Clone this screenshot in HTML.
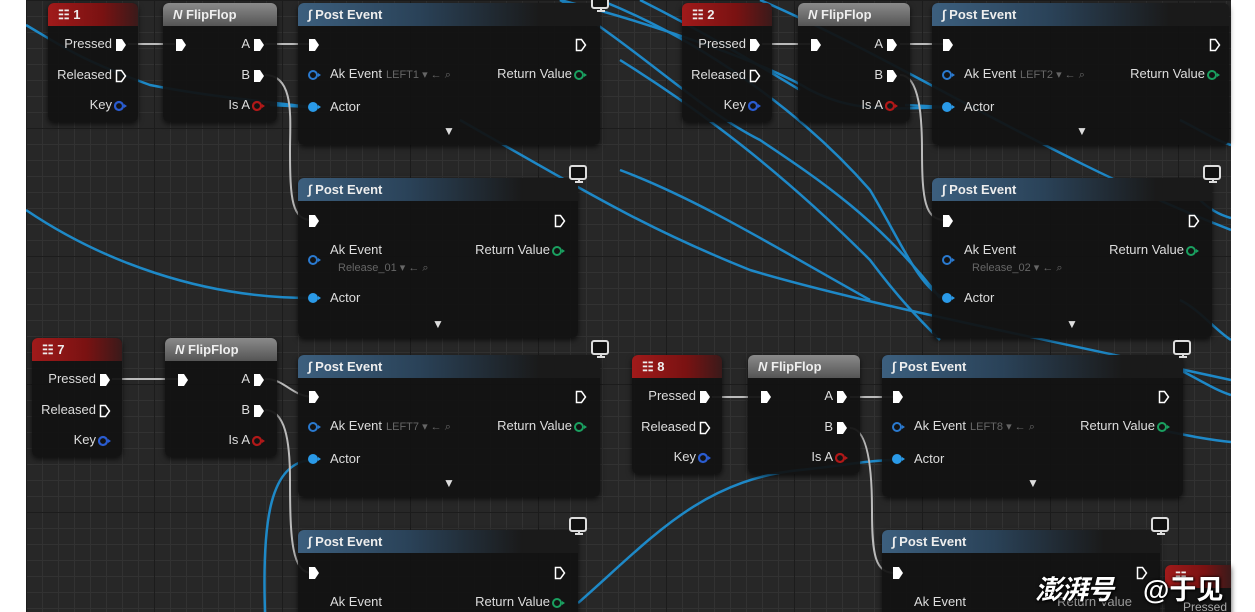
<!DOCTYPE html>
<html style="width:1255px;height:612px;overflow:hidden"><head><meta charset="utf-8"><style>
*{margin:0;padding:0;box-sizing:border-box}
body{width:1255px;height:612px;background:#fff;position:relative;overflow:hidden;font-family:"Liberation Sans","Noto Sans CJK SC",sans-serif;color:#ddd;font-size:13px}
#cv{position:absolute;left:26px;top:0;width:1205px;height:612px;background-color:#272727;
background-image:linear-gradient(#1c1c1c 1px,transparent 1px),linear-gradient(90deg,#1c1c1c 1px,transparent 1px),linear-gradient(#323232 1px,transparent 1px),linear-gradient(90deg,#323232 1px,transparent 1px);
background-size:128px 128px,128px 128px,16px 16px,16px 16px;overflow:hidden}
#clip{position:absolute;left:0;top:0;width:1255px;height:612px;overflow:hidden}
svg.w{position:absolute;left:0;top:0}
.n{position:absolute;background:rgba(18,18,18,.94);border-radius:6px;box-shadow:0 2px 6px rgba(0,0,0,.7);overflow:visible}
.h{height:23px;border-radius:6px 6px 0 0;font-weight:bold;font-size:13px;line-height:23px;padding-left:10px;color:#eee;position:relative}
.hk{background:linear-gradient(90deg,#a01a1a,#7a1212 60%,#3a1a1a)}
.hf{background:linear-gradient(180deg,#8a8a8a,#555)}
.hp{background:linear-gradient(90deg,#3c5f7e,#2a4258 40%,#1a1a1a 80%)}
.t{position:absolute;white-space:nowrap;line-height:16px}
.r{text-align:right}
.g{color:#666;font-size:11px}
.mon{position:absolute;width:22px;height:22px}
.wm{position:absolute;color:#fff;font-weight:bold;font-size:27px;text-shadow:0 0 3px #000,1px 1px 2px #000;white-space:nowrap}
</style></head><body><div id="clip">
<div id="cv">
<svg class="w" width="1205" height="612" viewBox="26 0 1205 612" fill="none">
<g stroke="#1e8ed0" stroke-width="2.5" opacity=".95">
<path d="M26 25 C60 45 80 60 150 85 C200 95 250 100 310 107"/>
<path d="M26 210 C100 260 200 298 310 298"/>
<path d="M560 0 C640 50 700 110 760 140 C820 180 880 220 940 298"/>
<path d="M600 0 C700 40 800 110 870 190 C900 240 920 290 945 298"/>
<path d="M620 60 C700 110 780 170 870 260 C900 300 920 320 940 340"/>
<path d="M620 170 C700 200 780 250 870 300"/>
<path d="M460 120 C600 200 650 230 750 270 C850 300 1000 330 1231 380"/>
<path d="M560 0 C640 20 760 60 810 90 C850 110 880 110 945 107"/>
<path d="M640 0 C700 30 750 60 800 90"/>
<path d="M760 0 C900 60 1050 160 1231 230"/>
<path d="M1180 120 C1200 130 1215 140 1231 145"/>
<path d="M1200 200 C1210 210 1220 215 1231 218"/>
<path d="M1180 300 C1200 310 1215 330 1231 340"/>
<path d="M1180 370 C1200 380 1215 390 1231 395"/>
<path d="M1160 430 C1190 436 1210 440 1231 442"/>
<path d="M265 612 C262 520 270 462 312 460"/>
<path d="M578 603 C650 540 700 480 800 470 C840 466 870 460 895 460"/>
<path d="M270 105 L310 107"/>
<path d="M905 105 L945 107"/>
</g>
<g stroke="#bbb" stroke-width="2">
<path d="M128 44 L175 44"/><path d="M265 44 L310 44"/>
<path d="M265 75 C295 75 290 120 290 150 C290 200 292 220 312 220"/>
<path d="M762 44 L810 44"/><path d="M900 44 L945 44"/>
<path d="M900 75 C920 75 922 120 922 150 C922 200 925 220 945 220"/>
<path d="M112 379 L178 379"/><path d="M265 379 C285 379 290 395 312 397"/>
<path d="M265 410 C285 410 290 440 290 480 C290 540 292 573 312 573"/>
<path d="M712 397 L762 397"/><path d="M850 397 L895 397"/>
<path d="M850 428 C870 428 872 480 872 510 C872 555 875 573 895 573"/>
</g>
</svg>
</div>

<!-- Key 1 -->
<div class="n" style="left:48px;top:3px;width:90px;height:119px"><div class="h hk">&#x2637; 1</div>
<div class="t r" style="right:26px;top:33px">Pressed</div><svg style="position:absolute;left:67px;top:35px" width="12" height="14"><path d="M1 1h6l4 6-4 6H1z" fill="#fff"/></svg>
<div class="t r" style="right:26px;top:64px">Released</div><svg style="position:absolute;left:67px;top:66px" width="12" height="14"><path d="M1.5 1.5h5l4 5.5-4 5.5h-5z" stroke="#fff" stroke-width="1.5" fill="none"/></svg>
<div class="t r" style="right:26px;top:94px">Key</div><svg style="position:absolute;left:66px;top:97px" width="14" height="12"><circle cx="5" cy="6" r="4" stroke="#2a5cd0" stroke-width="2.2" fill="none"/><path d="M10 4l3 2-3 2z" fill="#2a5cd0"/></svg>
</div>
<!-- FF 1 -->
<div class="n" style="left:163px;top:3px;width:114px;height:119px"><div class="h hf"><i>N</i> FlipFlop</div>
<svg style="position:absolute;left:12px;top:35px" width="12" height="14"><path d="M1 1h6l4 6-4 6H1z" fill="#fff"/></svg>
<div class="t r" style="right:27px;top:33px">A</div><svg style="position:absolute;left:90px;top:35px" width="12" height="14"><path d="M1 1h6l4 6-4 6H1z" fill="#fff"/></svg>
<div class="t r" style="right:27px;top:64px">B</div><svg style="position:absolute;left:90px;top:66px" width="12" height="14"><path d="M1 1h6l4 6-4 6H1z" fill="#fff"/></svg>
<div class="t r" style="right:27px;top:94px">Is A</div><svg style="position:absolute;left:89px;top:97px" width="14" height="12"><circle cx="5" cy="6" r="4" stroke="#b01818" stroke-width="2.2" fill="none"/><path d="M10 4l3 2-3 2z" fill="#b01818"/></svg>
</div>
<!-- PE 1a -->
<div class="n" style="left:298px;top:3px;width:302px;height:142px"><div class="h hp"><i>&#x222B;</i> Post Event</div>
<svg style="position:absolute;left:10px;top:35px" width="12" height="14"><path d="M1 1h6l4 6-4 6H1z" fill="#fff"/></svg>
<svg style="position:absolute;left:277px;top:35px" width="12" height="14"><path d="M1.5 1.5h5l4 5.5-4 5.5h-5z" stroke="#fff" stroke-width="1.5" fill="none"/></svg>
<svg style="position:absolute;left:10px;top:66px" width="14" height="12"><circle cx="5" cy="6" r="4" stroke="#2a7ad0" stroke-width="2" fill="none"/><path d="M10 4l3 2-3 2z" fill="#2a7ad0"/></svg>
<div class="t" style="left:32px;top:63px">Ak Event</div><div class="t g" style="left:88px;top:64px">LEFT1 &#x25BE; &#x2190; &#x2315;</div>
<div class="t r" style="right:28px;top:63px">Return Value</div><svg style="position:absolute;left:276px;top:66px" width="14" height="12"><circle cx="5" cy="6" r="4" stroke="#1aa060" stroke-width="2" fill="none"/><path d="M10 4l3 2-3 2z" fill="#1aa060"/></svg>
<svg style="position:absolute;left:10px;top:98px" width="14" height="12"><circle cx="5" cy="6" r="5" fill="#2a9ae8"/><path d="M10 4l3 2-3 2z" fill="#2a9ae8"/></svg>
<div class="t" style="left:32px;top:96px">Actor</div>
<div class="t" style="left:145px;top:120px;font-size:12px">&#x25BC;</div>
<svg class="mon" style="left:290px;top:-10px" viewBox="0 0 22 22"><rect x="4" y="2" width="16" height="13" rx="2" fill="#111" stroke="#ddd" stroke-width="2"/><path d="M9 18h8M13 15v3" stroke="#ddd" stroke-width="2"/></svg>
</div>
<!-- PE 1b -->
<div class="n" style="left:298px;top:178px;width:280px;height:160px"><div class="h hp"><i>&#x222B;</i> Post Event</div>
<svg style="position:absolute;left:10px;top:36px" width="12" height="14"><path d="M1 1h6l4 6-4 6H1z" fill="#fff"/></svg>
<svg style="position:absolute;left:256px;top:36px" width="12" height="14"><path d="M1.5 1.5h5l4 5.5-4 5.5h-5z" stroke="#fff" stroke-width="1.5" fill="none"/></svg>
<svg style="position:absolute;left:10px;top:76px" width="14" height="12"><circle cx="5" cy="6" r="4" stroke="#2a7ad0" stroke-width="2" fill="none"/><path d="M10 4l3 2-3 2z" fill="#2a7ad0"/></svg>
<div class="t" style="left:32px;top:64px">Ak Event</div><div class="t g" style="left:40px;top:82px">Release_01 &#x25BE; &#x2190; &#x2315;</div>
<div class="t r" style="right:28px;top:64px">Return Value</div><svg style="position:absolute;left:254px;top:67px" width="14" height="12"><circle cx="5" cy="6" r="4" stroke="#1aa060" stroke-width="2" fill="none"/><path d="M10 4l3 2-3 2z" fill="#1aa060"/></svg>
<svg style="position:absolute;left:10px;top:114px" width="14" height="12"><circle cx="5" cy="6" r="5" fill="#2a9ae8"/><path d="M10 4l3 2-3 2z" fill="#2a9ae8"/></svg>
<div class="t" style="left:32px;top:112px">Actor</div>
<div class="t" style="left:134px;top:138px;font-size:12px">&#x25BC;</div>
<svg class="mon" style="left:268px;top:-14px" viewBox="0 0 22 22"><rect x="4" y="2" width="16" height="13" rx="2" fill="#111" stroke="#ddd" stroke-width="2"/><path d="M9 18h8M13 15v3" stroke="#ddd" stroke-width="2"/></svg>
</div>

<!-- Key 2 -->
<div class="n" style="left:682px;top:3px;width:90px;height:119px"><div class="h hk">&#x2637; 2</div>
<div class="t r" style="right:26px;top:33px">Pressed</div><svg style="position:absolute;left:67px;top:35px" width="12" height="14"><path d="M1 1h6l4 6-4 6H1z" fill="#fff"/></svg>
<div class="t r" style="right:26px;top:64px">Released</div><svg style="position:absolute;left:67px;top:66px" width="12" height="14"><path d="M1.5 1.5h5l4 5.5-4 5.5h-5z" stroke="#fff" stroke-width="1.5" fill="none"/></svg>
<div class="t r" style="right:26px;top:94px">Key</div><svg style="position:absolute;left:66px;top:97px" width="14" height="12"><circle cx="5" cy="6" r="4" stroke="#2a5cd0" stroke-width="2.2" fill="none"/><path d="M10 4l3 2-3 2z" fill="#2a5cd0"/></svg>
</div>
<div class="n" style="left:798px;top:3px;width:112px;height:119px"><div class="h hf"><i>N</i> FlipFlop</div>
<svg style="position:absolute;left:12px;top:35px" width="12" height="14"><path d="M1 1h6l4 6-4 6H1z" fill="#fff"/></svg>
<div class="t r" style="right:27px;top:33px">A</div><svg style="position:absolute;left:88px;top:35px" width="12" height="14"><path d="M1 1h6l4 6-4 6H1z" fill="#fff"/></svg>
<div class="t r" style="right:27px;top:64px">B</div><svg style="position:absolute;left:88px;top:66px" width="12" height="14"><path d="M1 1h6l4 6-4 6H1z" fill="#fff"/></svg>
<div class="t r" style="right:27px;top:94px">Is A</div><svg style="position:absolute;left:87px;top:97px" width="14" height="12"><circle cx="5" cy="6" r="4" stroke="#b01818" stroke-width="2.2" fill="none"/><path d="M10 4l3 2-3 2z" fill="#b01818"/></svg>
</div>
<div class="n" style="left:932px;top:3px;width:297px;height:142px"><div class="h hp"><i>&#x222B;</i> Post Event</div>
<svg style="position:absolute;left:10px;top:35px" width="12" height="14"><path d="M1 1h6l4 6-4 6H1z" fill="#fff"/></svg>
<svg style="position:absolute;left:277px;top:35px" width="12" height="14"><path d="M1.5 1.5h5l4 5.5-4 5.5h-5z" stroke="#fff" stroke-width="1.5" fill="none"/></svg>
<svg style="position:absolute;left:10px;top:66px" width="14" height="12"><circle cx="5" cy="6" r="4" stroke="#2a7ad0" stroke-width="2" fill="none"/><path d="M10 4l3 2-3 2z" fill="#2a7ad0"/></svg>
<div class="t" style="left:32px;top:63px">Ak Event</div><div class="t g" style="left:88px;top:64px">LEFT2 &#x25BE; &#x2190; &#x2315;</div>
<div class="t r" style="right:24px;top:63px">Return Value</div><svg style="position:absolute;left:275px;top:66px" width="14" height="12"><circle cx="5" cy="6" r="4" stroke="#1aa060" stroke-width="2" fill="none"/><path d="M10 4l3 2-3 2z" fill="#1aa060"/></svg>
<svg style="position:absolute;left:10px;top:98px" width="14" height="12"><circle cx="5" cy="6" r="5" fill="#2a9ae8"/><path d="M10 4l3 2-3 2z" fill="#2a9ae8"/></svg>
<div class="t" style="left:32px;top:96px">Actor</div>
<div class="t" style="left:144px;top:120px;font-size:12px">&#x25BC;</div>
</div>
<div class="n" style="left:932px;top:178px;width:280px;height:160px"><div class="h hp"><i>&#x222B;</i> Post Event</div>
<svg style="position:absolute;left:10px;top:36px" width="12" height="14"><path d="M1 1h6l4 6-4 6H1z" fill="#fff"/></svg>
<svg style="position:absolute;left:256px;top:36px" width="12" height="14"><path d="M1.5 1.5h5l4 5.5-4 5.5h-5z" stroke="#fff" stroke-width="1.5" fill="none"/></svg>
<svg style="position:absolute;left:10px;top:76px" width="14" height="12"><circle cx="5" cy="6" r="4" stroke="#2a7ad0" stroke-width="2" fill="none"/><path d="M10 4l3 2-3 2z" fill="#2a7ad0"/></svg>
<div class="t" style="left:32px;top:64px">Ak Event</div><div class="t g" style="left:40px;top:82px">Release_02 &#x25BE; &#x2190; &#x2315;</div>
<div class="t r" style="right:28px;top:64px">Return Value</div><svg style="position:absolute;left:254px;top:67px" width="14" height="12"><circle cx="5" cy="6" r="4" stroke="#1aa060" stroke-width="2" fill="none"/><path d="M10 4l3 2-3 2z" fill="#1aa060"/></svg>
<svg style="position:absolute;left:10px;top:114px" width="14" height="12"><circle cx="5" cy="6" r="5" fill="#2a9ae8"/><path d="M10 4l3 2-3 2z" fill="#2a9ae8"/></svg>
<div class="t" style="left:32px;top:112px">Actor</div>
<div class="t" style="left:134px;top:138px;font-size:12px">&#x25BC;</div>
<svg class="mon" style="left:268px;top:-14px" viewBox="0 0 22 22"><rect x="4" y="2" width="16" height="13" rx="2" fill="#111" stroke="#ddd" stroke-width="2"/><path d="M9 18h8M13 15v3" stroke="#ddd" stroke-width="2"/></svg>
</div>

<!-- Key 7 -->
<div class="n" style="left:32px;top:338px;width:90px;height:119px"><div class="h hk">&#x2637; 7</div>
<div class="t r" style="right:26px;top:33px">Pressed</div><svg style="position:absolute;left:67px;top:35px" width="12" height="14"><path d="M1 1h6l4 6-4 6H1z" fill="#fff"/></svg>
<div class="t r" style="right:26px;top:64px">Released</div><svg style="position:absolute;left:67px;top:66px" width="12" height="14"><path d="M1.5 1.5h5l4 5.5-4 5.5h-5z" stroke="#fff" stroke-width="1.5" fill="none"/></svg>
<div class="t r" style="right:26px;top:94px">Key</div><svg style="position:absolute;left:66px;top:97px" width="14" height="12"><circle cx="5" cy="6" r="4" stroke="#2a5cd0" stroke-width="2.2" fill="none"/><path d="M10 4l3 2-3 2z" fill="#2a5cd0"/></svg>
</div>
<div class="n" style="left:165px;top:338px;width:112px;height:119px"><div class="h hf"><i>N</i> FlipFlop</div>
<svg style="position:absolute;left:12px;top:35px" width="12" height="14"><path d="M1 1h6l4 6-4 6H1z" fill="#fff"/></svg>
<div class="t r" style="right:27px;top:33px">A</div><svg style="position:absolute;left:88px;top:35px" width="12" height="14"><path d="M1 1h6l4 6-4 6H1z" fill="#fff"/></svg>
<div class="t r" style="right:27px;top:64px">B</div><svg style="position:absolute;left:88px;top:66px" width="12" height="14"><path d="M1 1h6l4 6-4 6H1z" fill="#fff"/></svg>
<div class="t r" style="right:27px;top:94px">Is A</div><svg style="position:absolute;left:87px;top:97px" width="14" height="12"><circle cx="5" cy="6" r="4" stroke="#b01818" stroke-width="2.2" fill="none"/><path d="M10 4l3 2-3 2z" fill="#b01818"/></svg>
</div>
<div class="n" style="left:298px;top:355px;width:302px;height:142px"><div class="h hp"><i>&#x222B;</i> Post Event</div>
<svg style="position:absolute;left:10px;top:35px" width="12" height="14"><path d="M1 1h6l4 6-4 6H1z" fill="#fff"/></svg>
<svg style="position:absolute;left:277px;top:35px" width="12" height="14"><path d="M1.5 1.5h5l4 5.5-4 5.5h-5z" stroke="#fff" stroke-width="1.5" fill="none"/></svg>
<svg style="position:absolute;left:10px;top:66px" width="14" height="12"><circle cx="5" cy="6" r="4" stroke="#2a7ad0" stroke-width="2" fill="none"/><path d="M10 4l3 2-3 2z" fill="#2a7ad0"/></svg>
<div class="t" style="left:32px;top:63px">Ak Event</div><div class="t g" style="left:88px;top:64px">LEFT7 &#x25BE; &#x2190; &#x2315;</div>
<div class="t r" style="right:28px;top:63px">Return Value</div><svg style="position:absolute;left:276px;top:66px" width="14" height="12"><circle cx="5" cy="6" r="4" stroke="#1aa060" stroke-width="2" fill="none"/><path d="M10 4l3 2-3 2z" fill="#1aa060"/></svg>
<svg style="position:absolute;left:10px;top:98px" width="14" height="12"><circle cx="5" cy="6" r="5" fill="#2a9ae8"/><path d="M10 4l3 2-3 2z" fill="#2a9ae8"/></svg>
<div class="t" style="left:32px;top:96px">Actor</div>
<div class="t" style="left:145px;top:120px;font-size:12px">&#x25BC;</div>
<svg class="mon" style="left:290px;top:-16px" viewBox="0 0 22 22"><rect x="4" y="2" width="16" height="13" rx="2" fill="#111" stroke="#ddd" stroke-width="2"/><path d="M9 18h8M13 15v3" stroke="#ddd" stroke-width="2"/></svg>
</div>
<div class="n" style="left:298px;top:530px;width:280px;height:100px"><div class="h hp"><i>&#x222B;</i> Post Event</div>
<svg style="position:absolute;left:10px;top:36px" width="12" height="14"><path d="M1 1h6l4 6-4 6H1z" fill="#fff"/></svg>
<svg style="position:absolute;left:256px;top:36px" width="12" height="14"><path d="M1.5 1.5h5l4 5.5-4 5.5h-5z" stroke="#fff" stroke-width="1.5" fill="none"/></svg>
<div class="t" style="left:32px;top:64px">Ak Event</div>
<div class="t r" style="right:28px;top:64px">Return Value</div><svg style="position:absolute;left:254px;top:67px" width="14" height="12"><circle cx="5" cy="6" r="4" stroke="#1aa060" stroke-width="2" fill="none"/><path d="M10 4l3 2-3 2z" fill="#1aa060"/></svg>
<svg class="mon" style="left:268px;top:-14px" viewBox="0 0 22 22"><rect x="4" y="2" width="16" height="13" rx="2" fill="#111" stroke="#ddd" stroke-width="2"/><path d="M9 18h8M13 15v3" stroke="#ddd" stroke-width="2"/></svg>
</div>

<!-- Key 8 -->
<div class="n" style="left:632px;top:355px;width:90px;height:119px"><div class="h hk">&#x2637; 8</div>
<div class="t r" style="right:26px;top:33px">Pressed</div><svg style="position:absolute;left:67px;top:35px" width="12" height="14"><path d="M1 1h6l4 6-4 6H1z" fill="#fff"/></svg>
<div class="t r" style="right:26px;top:64px">Released</div><svg style="position:absolute;left:67px;top:66px" width="12" height="14"><path d="M1.5 1.5h5l4 5.5-4 5.5h-5z" stroke="#fff" stroke-width="1.5" fill="none"/></svg>
<div class="t r" style="right:26px;top:94px">Key</div><svg style="position:absolute;left:66px;top:97px" width="14" height="12"><circle cx="5" cy="6" r="4" stroke="#2a5cd0" stroke-width="2.2" fill="none"/><path d="M10 4l3 2-3 2z" fill="#2a5cd0"/></svg>
</div>
<div class="n" style="left:748px;top:355px;width:112px;height:119px"><div class="h hf"><i>N</i> FlipFlop</div>
<svg style="position:absolute;left:12px;top:35px" width="12" height="14"><path d="M1 1h6l4 6-4 6H1z" fill="#fff"/></svg>
<div class="t r" style="right:27px;top:33px">A</div><svg style="position:absolute;left:88px;top:35px" width="12" height="14"><path d="M1 1h6l4 6-4 6H1z" fill="#fff"/></svg>
<div class="t r" style="right:27px;top:64px">B</div><svg style="position:absolute;left:88px;top:66px" width="12" height="14"><path d="M1 1h6l4 6-4 6H1z" fill="#fff"/></svg>
<div class="t r" style="right:27px;top:94px">Is A</div><svg style="position:absolute;left:87px;top:97px" width="14" height="12"><circle cx="5" cy="6" r="4" stroke="#b01818" stroke-width="2.2" fill="none"/><path d="M10 4l3 2-3 2z" fill="#b01818"/></svg>
</div>
<div class="n" style="left:882px;top:355px;width:301px;height:142px"><div class="h hp"><i>&#x222B;</i> Post Event</div>
<svg style="position:absolute;left:10px;top:35px" width="12" height="14"><path d="M1 1h6l4 6-4 6H1z" fill="#fff"/></svg>
<svg style="position:absolute;left:276px;top:35px" width="12" height="14"><path d="M1.5 1.5h5l4 5.5-4 5.5h-5z" stroke="#fff" stroke-width="1.5" fill="none"/></svg>
<svg style="position:absolute;left:10px;top:66px" width="14" height="12"><circle cx="5" cy="6" r="4" stroke="#2a7ad0" stroke-width="2" fill="none"/><path d="M10 4l3 2-3 2z" fill="#2a7ad0"/></svg>
<div class="t" style="left:32px;top:63px">Ak Event</div><div class="t g" style="left:88px;top:64px">LEFT8 &#x25BE; &#x2190; &#x2315;</div>
<div class="t r" style="right:28px;top:63px">Return Value</div><svg style="position:absolute;left:275px;top:66px" width="14" height="12"><circle cx="5" cy="6" r="4" stroke="#1aa060" stroke-width="2" fill="none"/><path d="M10 4l3 2-3 2z" fill="#1aa060"/></svg>
<svg style="position:absolute;left:10px;top:98px" width="14" height="12"><circle cx="5" cy="6" r="5" fill="#2a9ae8"/><path d="M10 4l3 2-3 2z" fill="#2a9ae8"/></svg>
<div class="t" style="left:32px;top:96px">Actor</div>
<div class="t" style="left:145px;top:120px;font-size:12px">&#x25BC;</div>
<svg class="mon" style="left:288px;top:-16px" viewBox="0 0 22 22"><rect x="4" y="2" width="16" height="13" rx="2" fill="#111" stroke="#ddd" stroke-width="2"/><path d="M9 18h8M13 15v3" stroke="#ddd" stroke-width="2"/></svg>
</div>
<div class="n" style="left:882px;top:530px;width:278px;height:100px"><div class="h hp"><i>&#x222B;</i> Post Event</div>
<svg style="position:absolute;left:10px;top:36px" width="12" height="14"><path d="M1 1h6l4 6-4 6H1z" fill="#fff"/></svg>
<svg style="position:absolute;left:254px;top:36px" width="12" height="14"><path d="M1.5 1.5h5l4 5.5-4 5.5h-5z" stroke="#fff" stroke-width="1.5" fill="none"/></svg>
<div class="t" style="left:32px;top:64px">Ak Event</div>
<div class="t r" style="right:28px;top:64px;color:#999">Return Value</div>
<svg class="mon" style="left:266px;top:-14px" viewBox="0 0 22 22"><rect x="4" y="2" width="16" height="13" rx="2" fill="#111" stroke="#ddd" stroke-width="2"/><path d="M9 18h8M13 15v3" stroke="#ddd" stroke-width="2"/></svg>
</div>
<div class="n" style="left:1165px;top:565px;width:66px;height:60px;border-radius:6px 0 0 0"><div class="h hk" style="border-radius:6px 0 0 0">&#x2637;</div><div class="t" style="left:18px;top:34px;font-size:12px;color:#aaa">Pressed</div></div>

<div class="wm" style="left:1035px;top:568px;font-style:italic;letter-spacing:-1px">澎湃号</div>
<div class="wm" style="left:1143px;top:568px">@于见</div>
</div></body></html>
